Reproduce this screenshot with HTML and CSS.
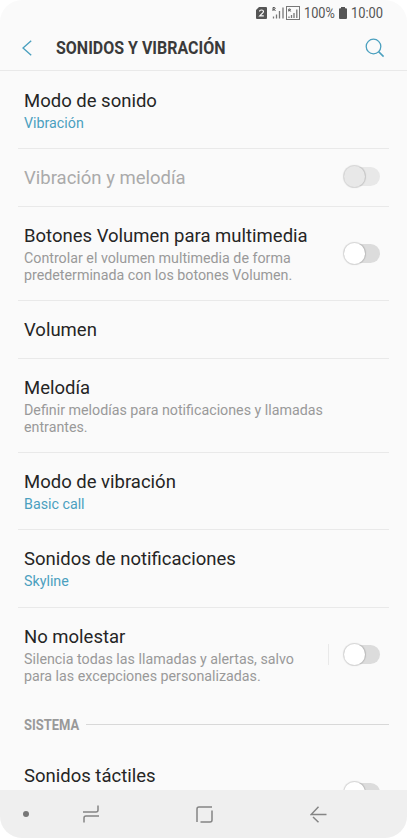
FILE: index.html
```
<!DOCTYPE html>
<html lang="es">
<head>
    <meta charset="UTF-8">
    <meta name="viewport" content="width=device-width, initial-scale=1">
    <title>Sonidos y vibración</title>
    <link rel="stylesheet" href="styles.css">
</head>
<body>
    <div class="phone">
        <div class="status-bar">
            <svg class="sim" width="11" height="12" viewBox="0 0 11 12">
                <path d="M3 0h7q1 0 1 1v10q0 1-1 1H1q-1 0-1-1V3z" fill="#555"/>
                <path d="M3.5 4.4q0-1.4 2-1.4t2 1.4q0 1-1.6 2.3L3.8 8.8h4" fill="none" stroke="#fafafa" stroke-width="1.2"/>
            </svg>
            <svg class="signal" width="28" height="14" viewBox="0 0 28 14">
                <path d="M1 5V1.5h1.2q1 0 1 .9t-1 .9H1m1.200 0L3.400 5" fill="none" stroke="#555" stroke-width="1"/>
                <path d="M1.500 10.500v2M4.500 8.500v4M7.500 5v7.500M11 1.500v11" stroke="#777" stroke-width="1.300"/>
                <rect x="14.500" y=".5" width="13" height="13" fill="none" stroke="#777"/>
                <path d="M16.800 5.500V3h1q.7 0 .7.700t-.7.700h-1m1 0l.9 1.100" fill="none" stroke="#555" stroke-width="1"/>
                <path d="M17 10.500V12M19.500 9v3M22 7v5M24.800 3.500V12" stroke="#777" stroke-width="1.300"/>
            </svg>
            <span class="percent">100%</span>
            <svg class="battery" width="8" height="12" viewBox="0 0 8 12">
                <path d="M2 0h4v1.200h1q1 0 1 1V11q0 1-1 1H1q-1 0-1-1V2.200q0-1 1-1h1z" fill="#555"/>
            </svg>
            <span class="clock">10:00</span>
        </div>

        <header class="header">
            <svg class="back" width="10" height="16" viewBox="0 0 10 16">
                <path d="M9.200.7L1 8l8.200 7.300" fill="none" stroke="#4ba0bf" stroke-width="1.400"/>
            </svg>
            <h1>SONIDOS Y VIBRACIÓN</h1>
            <svg class="search" width="20" height="20" viewBox="0 0 20 20">
                <circle cx="8.500" cy="8.500" r="7.300" fill="none" stroke="#4ba0bf" stroke-width="1.300"/>
                <path d="M13.600 13.600l5 5" stroke="#4ba0bf" stroke-width="1.500"/>
            </svg>
        </header>

        <main class="list">
            <div class="row row-sub first">
                <div class="text">
                    <div class="name">Modo de sonido</div>
                    <div class="value">Vibración</div>
                </div>
            </div>
            <div class="row row-single disabled">
                <div class="text">
                    <div class="name">Vibración y melodía</div>
                </div>
                <div class="switch"></div>
            </div>
            <div class="row row-double">
                <div class="text">
                    <div class="name">Botones Volumen para multimedia</div>
                    <div class="desc">Controlar el volumen multimedia de forma<br>predeterminada con los botones Volumen.</div>
                </div>
                <div class="switch"></div>
            </div>
            <div class="row row-single">
                <div class="text">
                    <div class="name">Volumen</div>
                </div>
            </div>
            <div class="row row-double">
                <div class="text">
                    <div class="name">Melodía</div>
                    <div class="desc">Definir melodías para notificaciones y llamadas<br>entrantes.</div>
                </div>
            </div>
            <div class="row row-sub short">
                <div class="text">
                    <div class="name">Modo de vibración</div>
                    <div class="value">Basic call</div>
                </div>
            </div>
            <div class="row row-sub">
                <div class="text">
                    <div class="name">Sonidos de notificaciones</div>
                    <div class="value">Skyline</div>
                </div>
            </div>
            <div class="row row-double last">
                <div class="text">
                    <div class="name">No molestar</div>
                    <div class="desc">Silencia todas las llamadas y alertas, salvo<br>para las excepciones personalizadas.</div>
                </div>
                <div class="separator"></div>
                <div class="switch"></div>
            </div>
            <div class="section">
                <h2>SISTEMA</h2>
                <div class="line"></div>
            </div>
            <div class="row row-cut">
                <div class="text">
                    <div class="name">Sonidos táctiles</div>
                </div>
                <div class="switch"></div>
            </div>
        </main>

        <nav class="nav-bar">
            <div class="dot"></div>
            <svg class="recents" width="16" height="18" viewBox="0 0 16 18">
                <path d="M0 7h13q2 0 2-2V.5M16 11H3q-2 0-2 2v4.500" fill="none" stroke="#858585" stroke-width="1.500"/>
            </svg>
            <svg class="home" width="17" height="17" viewBox="0 0 17 17">
                <path d="M16 1H3Q1 1 1 3v13M4.500 16H14q2 0 2-2V4.500" fill="none" stroke="#858585" stroke-width="1.500"/>
            </svg>
            <svg class="return" width="17" height="17" viewBox="0 0 17 17">
                <path d="M16.500 8.500H1.200L8.500.8M3 11l5.500 5.300" fill="none" stroke="#858585" stroke-width="1.500"/>
            </svg>
        </nav>
    </div>
</body>
</html>
```
FILE: styles.css
```
body {
    margin: 0;
    background: #fff;
    font-family: Roboto, Arial, sans-serif;
}

.phone {
    display: flex;
    flex-direction: column;
    width: 407px;
    height: 838px;
    background: #fafafa;
    border-radius: 22px;
    overflow: hidden;
}

.status-bar {
    display: flex;
    align-items: center;
    flex: none;
    height: 26px;
    padding-left: 256px;
    font-size: 14px;
    color: #555;
    white-space: nowrap;
}

.status-bar svg {
    flex: none;
}

.signal {
    margin-left: 5px;
}

.percent {
    width: 31px;
    margin-left: 4px;
    transform: scaleX(0.91);
    transform-origin: left;
}

.battery {
    margin-left: 4px;
}

.clock {
    margin-left: 4px;
    transform: scaleX(0.92);
    transform-origin: left;
}

.header {
    display: flex;
    align-items: center;
    flex: none;
    box-sizing: border-box;
    height: 45px;
    padding: 0 22px;
    border-bottom: 1px solid #e9e9e9;
}

.header h1 {
    flex: 1;
    margin: 0 0 0 24px;
    font-size: 18px;
    font-weight: bold;
    line-height: 24px;
    color: #3a3a3a;
    white-space: nowrap;
    transform: scaleX(0.888);
    transform-origin: left;
}

.list {
    flex: 1;
    min-height: 0;
    padding: 0 18px;
    overflow: hidden;
}

.row {
    display: flex;
    box-sizing: border-box;
    padding: 18px 9px 0 6px;
    border-bottom: 1px solid #e9e9e9;
}

.row-sub {
    height: 78px;
}

.row-sub.short {
    height: 77px;
}

.row-sub.first {
    padding-top: 19px;
}

.row-single {
    height: 58px;
}

.row-double {
    height: 94px;
}

.last,
.row-cut {
    border-bottom: none;
}

.text {
    flex: 1;
    white-space: nowrap;
}

.name {
    font-size: 18.5px;
    line-height: 23px;
    color: #252525;
}

.value,
.desc {
    margin-top: 2px;
    font-size: 14.26px;
    line-height: 17px;
    color: #999;
}

.value {
    color: #4ba0bf;
}

.disabled .name {
    color: #aaa;
}

.switch {
    flex: none;
    position: relative;
    width: 36px;
    height: 19px;
    border-radius: 10px;
    background: #dcdcdc;
}

.switch::before {
    content: "";
    position: absolute;
    top: -1px;
    left: 0;
    width: 21px;
    height: 21px;
    border-radius: 50%;
    background: #fff;
    box-shadow: 0 0 1px 1px rgba(0, 0, 0, 0.15);
}

.row-double .switch {
    margin-top: 19px;
}

.disabled .switch,
.disabled .switch::before {
    background: #e8e8e8;
}

.separator {
    width: 1px;
    height: 21px;
    margin: 18px 15px 0 0;
    background: #e9e9e9;
}

.section {
    display: flex;
    align-items: center;
    height: 45px;
    padding-left: 6px;
}

.section h2 {
    width: 62px;
    margin: 0;
    font-size: 14px;
    font-weight: bold;
    color: #999;
    transform: scaleX(0.925);
    transform-origin: left;
}

.section .line {
    flex: 1;
    height: 1px;
    background: #d8d8d8;
}

.row-cut .switch {
    margin-top: 18px;
}

.nav-bar {
    display: flex;
    align-items: center;
    flex: none;
    height: 48px;
    padding-left: 23px;
    background: #efefef;
}

.dot {
    width: 6px;
    height: 6px;
    border-radius: 50%;
    background: #777;
}

.recents {
    margin-left: 54px;
}

.home {
    margin-left: 97px;
}

.return {
    margin-left: 97px;
}
```
